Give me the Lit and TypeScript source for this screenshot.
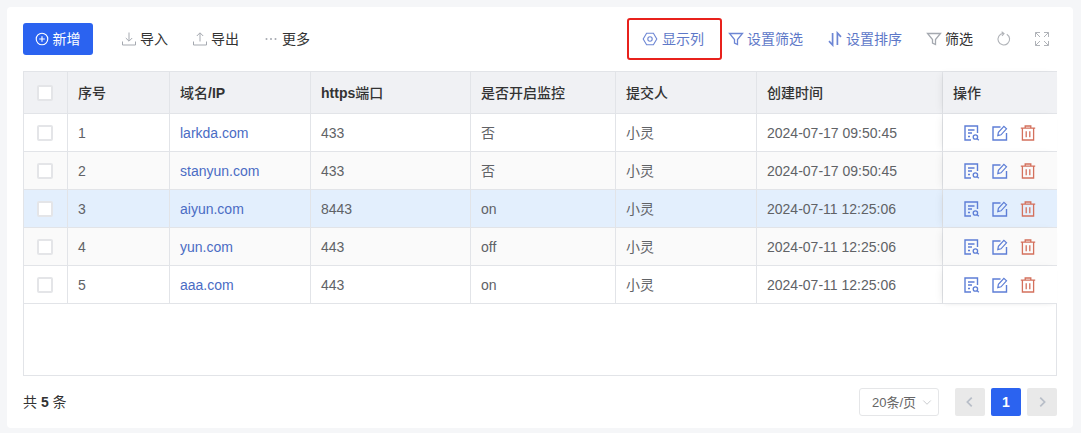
import { LitElement, html, css, svg } from "lit";
import { customElement } from "lit/decorators.js";

const rows = [
  ["1", "larkda.com", "433", "否", "小灵", "2024-07-17 09:50:45"],
  ["2", "stanyun.com", "433", "否", "小灵", "2024-07-17 09:50:45"],
  ["3", "aiyun.com", "8443", "on", "小灵", "2024-07-11 12:25:06"],
  ["4", "yun.com", "443", "off", "小灵", "2024-07-11 12:25:06"],
  ["5", "aaa.com", "443", "on", "小灵", "2024-07-11 12:25:06"],
];
const widths = [44, 102, 141, 160, 145, 141, 186, 114];
const heads = [
  html`序号`,
  html`域名<b>/IP</b>`,
  html`<b>https</b>端口`,
  html`是否开启监控`,
  html`提交人`,
  html`创建时间`,
];

const ic = (size: number, body: unknown) => html`<svg class="ic" width=${size} height=${size} viewBox="0 0 16 16" fill="none" stroke="currentColor" stroke-width="1">${body}</svg>`;

const icons = {
  plus: ic(14, svg`<circle cx="8" cy="8" r="6.6" stroke-width="1.3"/><path d="M8 4.8v6.4M4.8 8h6.4" stroke-width="1.3"/>`),
  down: ic(16, svg`<path d="M8 1.5v8.5M4.8 7 8 10.2 11.2 7M1.5 10.5v3.5h13v-3.5"/>`),
  up: ic(16, svg`<path d="M8 10.5V2M4.8 5 8 1.8 11.2 5M1.5 10.5v3.5h13v-3.5"/>`),
  more: ic(16, svg`<circle cx="3.5" cy="8" r="1" fill="currentColor" stroke="none"/><circle cx="8" cy="8" r="1" fill="currentColor" stroke="none"/><circle cx="12.5" cy="8" r="1" fill="currentColor" stroke="none"/>`),
  col: ic(16, svg`<path d="M4.6 2.2h6.8L14.8 8l-3.4 5.8H4.6L1.2 8z" stroke-width="1.1"/><circle cx="8" cy="8" r="2.2" stroke-width="1.1"/>`),
  filter: ic(16, svg`<path d="M1.5 2.5h13L9.5 8.6v4.9L6.5 12V8.6z" stroke-width="1.3"/>`),
  sort: ic(16, svg`<path d="M5.6 2v12L2 10.2M10.4 14V2l3.6 3.8" stroke-width="1.7"/>`),
  refresh: ic(16, svg`<path d="M10.8 3.2A5.8 5.8 0 1 1 7.2 2.4" stroke-width="1.1"/><path d="M5.6 .8 8 2.6 6 4.8" stroke-width="1.1"/>`),
  full: ic(16, svg`<path d="M1.5 6V1.5H6M1.5 1.5 6 6M14.5 6V1.5H10M14.5 1.5 10 6M1.5 10v4.5H6M1.5 14.5 6 10M14.5 10v4.5H10M14.5 14.5 10 10"/>`),
  detail: ic(16, svg`<path d="M7 15H1V1h12.5v7" stroke-width="1.4"/><path d="M4 5h6.5M4 8h4M4 11.5h2" stroke-width="1.3"/><circle cx="11.4" cy="12" r="2.2" stroke-width="1.3"/><path d="m13 13.6 1.8 1.6" stroke-width="1.3"/>`),
  edit: ic(16, svg`<path d="M8.5 2H1v13h13.5V8" stroke-width="1.4"/><path d="M5.8 10.6 6.4 7.4 11.9 1.4l2.6 2.4-5.5 6z" stroke-width="1.2"/>`),
  del: ic(16, svg`<path d="M.8 3.2h14.4M5.2 3V1h5.6v2M2.4 3.2V15h11.2V3.2M6.2 6.2v6M9.8 6.2v6" stroke-width="1.3"/>`),
  left: ic(14, svg`<path d="M10 3 5 8l5 5" stroke-width="2"/>`),
  right: ic(14, svg`<path d="m6 3 5 5-5 5" stroke-width="2"/>`),
  chev: ic(12, svg`<path d="m3 6 5 5 5-5" stroke-width="1.2"/>`),
};

@customElement("app-root")
export class AppRoot extends LitElement {
  static styles = css`
    :host {
      display: block;
      width: 1081px;
      height: 433px;
      box-sizing: border-box;
      padding: 7px 8px 5px 7px;
      background: #f5f6f8;
      font-family: "Liberation Sans", "Noto Sans CJK SC", sans-serif;
      font-size: 14px;
      color: #333;
      overflow: hidden;
    }
    .card {
      height: 100%;
      box-sizing: border-box;
      background: #fff;
      border-radius: 4px;
      padding: 16px 16px 0;
      display: flex;
      flex-direction: column;
    }
    .ic { flex: none; display: block; }
    .toolbar {
      height: 32px;
      display: flex;
      align-items: center;
      justify-content: space-between;
    }
    .group { display: flex; align-items: center; }
    .txt { padding-bottom: 2px; }
    .primary {
      width: 70px;
      height: 32px;
      box-sizing: border-box;
      border-radius: 3px;
      background: #2b63f0;
      color: #fff;
      display: flex;
      align-items: center;
      justify-content: center;
      gap: 4px;
      padding-right: 1px;
      margin-right: 28px;
    }
    .tool { display: flex; align-items: center; gap: 3px; color: #333; }
    .tool .ic { color: #a5a9b0; }
    .left .tool { margin-right: 24px; }
    .left .tool:last-child { margin-right: 0; }
    .blue { color: #5d78c8; }
    .blue .ic { color: #6d86d4; }
    .highlight {
      width: 95px;
      height: 42px;
      box-sizing: border-box;
      border: 2px solid #e8211c;
      border-radius: 3px;
      display: flex;
      align-items: center;
      justify-content: flex-start;
      gap: 4px;
      padding-left: 13px;
      margin-right: 6px;
    }
    .gap { margin-right: 24px; }
    .gap-s { margin-right: 23px; }
    .plain .ic { color: #a5a9b0; }
    .tail { margin-right: 7px; gap: 22px; }
    .tail .ic { color: #b0b3b8; }
    .table-wrap {
      margin-top: 16px;
      height: 305px;
      box-sizing: border-box;
      border: 1px solid #e2e4e8;
      width: 1034px;
      flex: none;
    }
    table {
      border-collapse: separate;
      border-spacing: 0;
      table-layout: fixed;
      width: 1033px;
    }
    th, td {
      box-sizing: border-box;
      padding: 0 10px;
      text-align: left;
      border-right: 1px solid #e2e4e8;
      border-bottom: 1px solid #e2e4e8;
      white-space: nowrap;
      color: #606266;
      background: #fff;
    }
    th {
      height: 42px;
      background: #f0f1f4;
      color: #333;
      font-weight: 500;
      padding-bottom: 2px;
    }
    th b { font-weight: 700; }
    td { height: 38px; }
    td.cjk { padding-bottom: 2px; }
    tr.alt td { background: #fafafa; }
    tr.active td { background: #e3effd; }
    th:last-child, td:last-child {
      border-right: none;
      box-shadow: -4px 0 8px -3px rgba(0, 0, 0, 0.08), 0 2px 4px -2px rgba(0, 0, 0, 0.05);
      position: relative;
    }
    .chk-cell { padding: 0 0 0 13px; }
    .chk {
      display: block;
      width: 16px;
      height: 16px;
      box-sizing: border-box;
      background: #fff;
      border: 2px solid #e4e5e8;
      border-radius: 2px;
    }
    a { color: #4a6cc4; text-decoration: none; }
    .ops { display: flex; align-items: center; gap: 12px; padding-left: 11px; }
    .ops .a { color: #5d7ed6; }
    .ops .d { color: #d4705c; }
    .footer {
      flex: 1;
      display: flex;
      align-items: center;
      justify-content: space-between;
      padding-bottom: 1px;
    }
    .total { padding-bottom: 2px; }
    .total b { color: #333; }
    .pager { display: flex; align-items: center; }
    .size {
      width: 80px;
      height: 28px;
      box-sizing: border-box;
      border: 1px solid #e5e6e8;
      border-radius: 3px;
      display: flex;
      align-items: center;
      justify-content: space-between;
      padding: 0 5px 0 12px;
      color: #666;
      margin-right: 16px;
      font-size: 13px;
      white-space: nowrap;
    }
    .size .ic { color: #c4c6ca; }
    .pg {
      width: 30px;
      height: 28px;
      border-radius: 2px;
      background: #e9e9e9;
      color: #b8bec8;
      display: flex;
      align-items: center;
      justify-content: center;
      margin-right: 6px;
    }
    .pg:last-child { margin-right: 0; }
    .pg.on { background: #2b63f0; color: #fff; font-weight: 700; }
  `;

  render() {
    return html`<div class="card">
      <div class="toolbar">
        <div class="group left">
          <div class="primary">${icons.plus}<span class="txt">新增</span></div>
          <div class="tool">${icons.down}<span class="txt">导入</span></div>
          <div class="tool">${icons.up}<span class="txt">导出</span></div>
          <div class="tool">${icons.more}<span class="txt">更多</span></div>
        </div>
        <div class="group">
          <div class="tool blue highlight">${icons.col}<span class="txt">显示列</span></div>
          <div class="tool blue gap">${icons.filter}<span class="txt">设置筛选</span></div>
          <div class="tool blue gap">${icons.sort}<span class="txt">设置排序</span></div>
          <div class="tool plain gap-s">${icons.filter}<span class="txt">筛选</span></div>
          <div class="group tail">${icons.refresh}${icons.full}</div>
        </div>
      </div>
      <div class="table-wrap">
        <table>
          <colgroup>${widths.map((w) => html`<col style="width:${w}px" />`)}</colgroup>
          <thead>
            <tr>
              <th class="chk-cell"><span class="chk"></span></th>
              ${heads.map((h) => html`<th>${h}</th>`)}
              <th>操作</th>
            </tr>
          </thead>
          <tbody>
            ${rows.map(
              (r, i) => html`<tr class=${i === 2 ? "active" : i % 2 ? "alt" : ""}>
                <td class="chk-cell"><span class="chk"></span></td>
                <td>${r[0]}</td>
                <td><a>${r[1]}</a></td>
                <td>${r[2]}</td>
                <td class=${r[3] === "否" ? "cjk" : ""}>${r[3]}</td>
                <td class="cjk">${r[4]}</td>
                <td>${r[5]}</td>
                <td><div class="ops"><span class="a">${icons.detail}</span><span class="a">${icons.edit}</span><span class="d">${icons.del}</span></div></td>
              </tr>`
            )}
          </tbody>
        </table>
      </div>
      <div class="footer">
        <div class="total">共 <b>5</b> 条</div>
        <div class="pager">
          <div class="size"><span>20条/页</span>${icons.chev}</div>
          <div class="pg">${icons.left}</div>
          <div class="pg on">1</div>
          <div class="pg">${icons.right}</div>
        </div>
      </div>
    </div>`;
  }
}
